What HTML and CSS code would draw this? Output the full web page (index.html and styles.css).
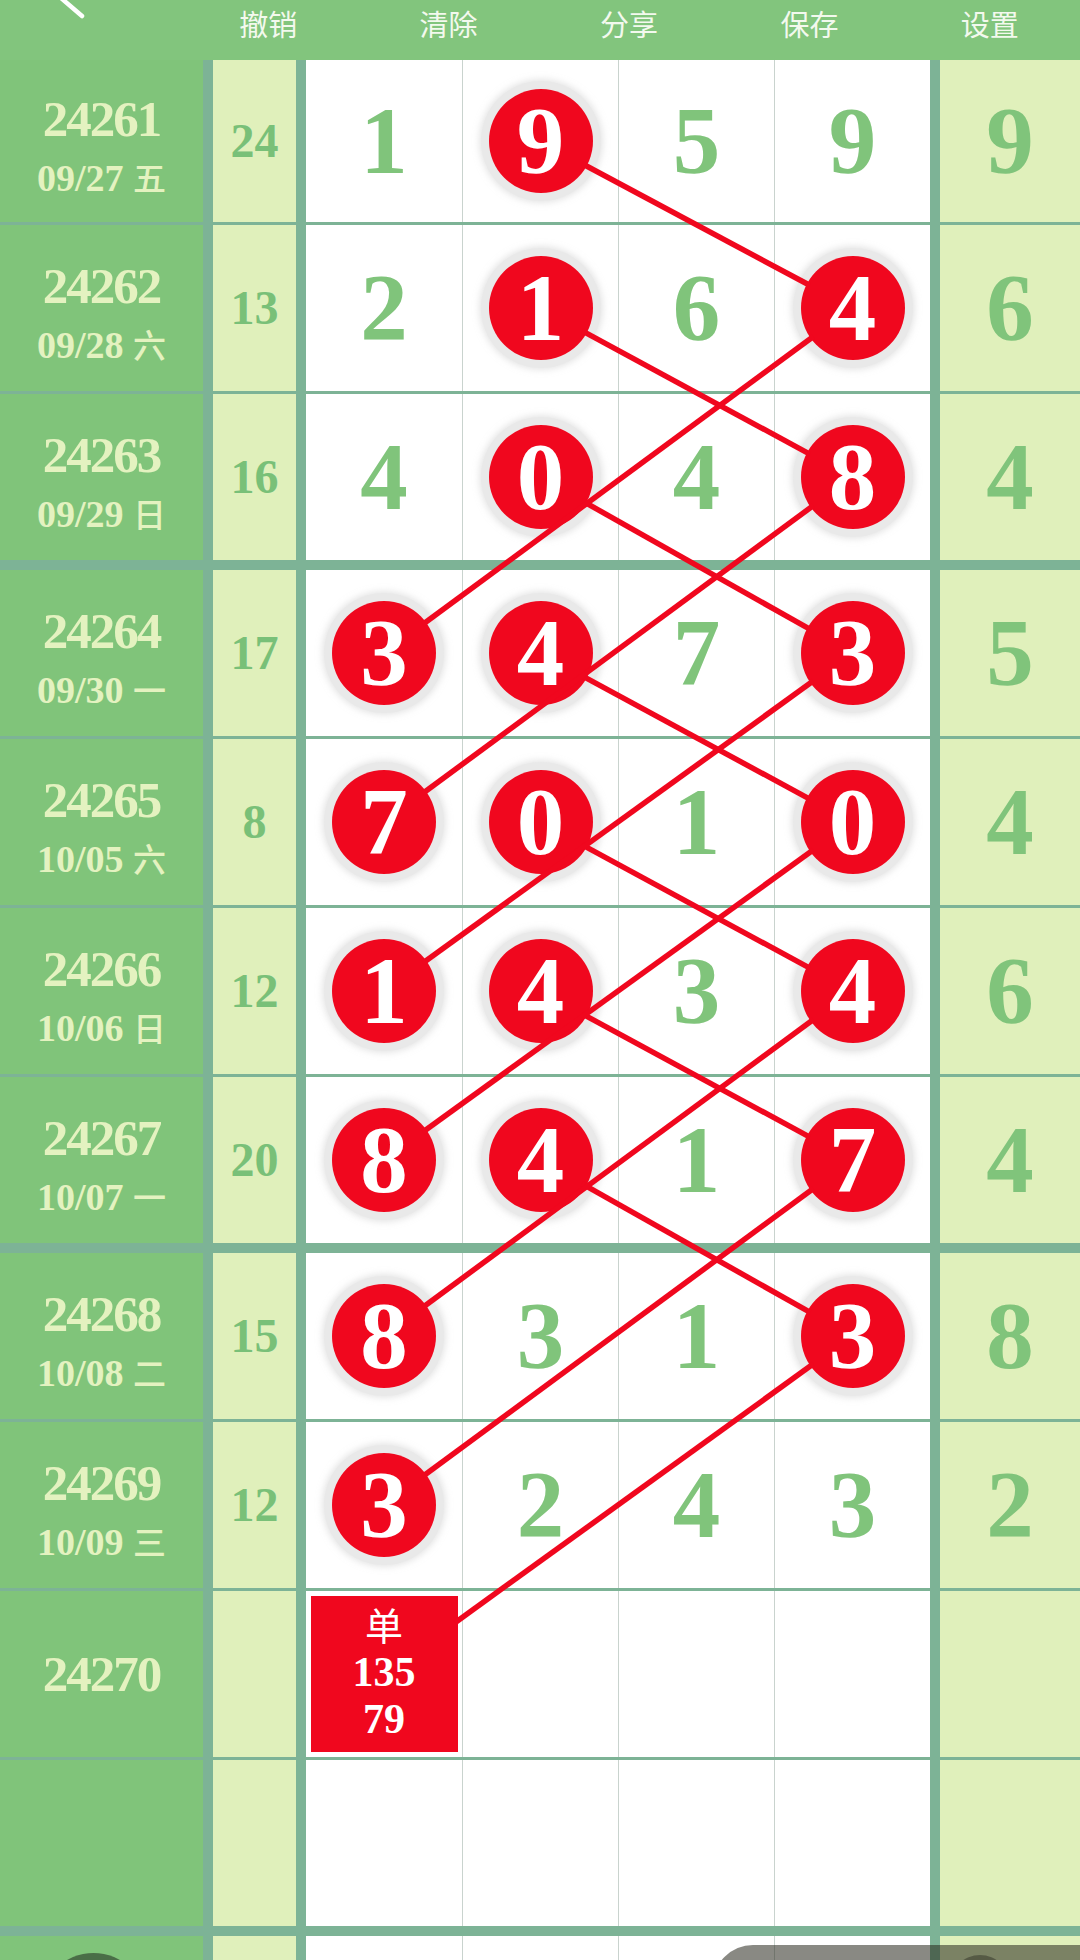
FILE: index.html
```html
<!DOCTYPE html>
<html lang="zh">
<head>
<meta charset="utf-8">
<title>走势图</title>
<link rel="stylesheet" href="styles.css">
</head>
<body>
<div class="page">
  <header class="topbar">
    <div class="back">
      <svg width="40" height="20" viewBox="0 0 40 20"><path d="M30 -24 L6 -2 L27 16" fill="none" stroke="#ffffff" stroke-width="4.5" stroke-linecap="round" stroke-linejoin="round"/></svg>
    </div>
    <span class="tool">撤销</span>
    <span class="tool">清除</span>
    <span class="tool">分享</span>
    <span class="tool">保存</span>
    <span class="tool">设置</span>
  </header>

  <main class="board">
    <section class="block">
      <div class="row row-cut">
        <div class="c-date"><span class="issue">24261</span><span class="date">09/27 <span class="wk">五</span></span></div>
        <div class="c-miss">24</div>
        <div class="c-main">
          <div class="cell"><span class="num">1</span></div>
          <div class="cell"><span class="ball">9</span></div>
          <div class="cell"><span class="num">5</span></div>
          <div class="cell"><span class="num">9</span></div>
        </div>
        <div class="c-tail"><span class="num">9</span></div>
      </div>
      <div class="row">
        <div class="c-date"><span class="issue">24262</span><span class="date">09/28 <span class="wk">六</span></span></div>
        <div class="c-miss">13</div>
        <div class="c-main">
          <div class="cell"><span class="num">2</span></div>
          <div class="cell"><span class="ball">1</span></div>
          <div class="cell"><span class="num">6</span></div>
          <div class="cell"><span class="ball">4</span></div>
        </div>
        <div class="c-tail"><span class="num">6</span></div>
      </div>
      <div class="row">
        <div class="c-date"><span class="issue">24263</span><span class="date">09/29 <span class="wk">日</span></span></div>
        <div class="c-miss">16</div>
        <div class="c-main">
          <div class="cell"><span class="num">4</span></div>
          <div class="cell"><span class="ball">0</span></div>
          <div class="cell"><span class="num">4</span></div>
          <div class="cell"><span class="ball">8</span></div>
        </div>
        <div class="c-tail"><span class="num">4</span></div>
      </div>
    </section>

    <section class="block">
      <div class="row">
        <div class="c-date"><span class="issue">24264</span><span class="date">09/30 <span class="wk">一</span></span></div>
        <div class="c-miss">17</div>
        <div class="c-main">
          <div class="cell"><span class="ball">3</span></div>
          <div class="cell"><span class="ball">4</span></div>
          <div class="cell"><span class="num">7</span></div>
          <div class="cell"><span class="ball">3</span></div>
        </div>
        <div class="c-tail"><span class="num">5</span></div>
      </div>
      <div class="row">
        <div class="c-date"><span class="issue">24265</span><span class="date">10/05 <span class="wk">六</span></span></div>
        <div class="c-miss">8</div>
        <div class="c-main">
          <div class="cell"><span class="ball">7</span></div>
          <div class="cell"><span class="ball">0</span></div>
          <div class="cell"><span class="num">1</span></div>
          <div class="cell"><span class="ball">0</span></div>
        </div>
        <div class="c-tail"><span class="num">4</span></div>
      </div>
      <div class="row">
        <div class="c-date"><span class="issue">24266</span><span class="date">10/06 <span class="wk">日</span></span></div>
        <div class="c-miss">12</div>
        <div class="c-main">
          <div class="cell"><span class="ball">1</span></div>
          <div class="cell"><span class="ball">4</span></div>
          <div class="cell"><span class="num">3</span></div>
          <div class="cell"><span class="ball">4</span></div>
        </div>
        <div class="c-tail"><span class="num">6</span></div>
      </div>
      <div class="row">
        <div class="c-date"><span class="issue">24267</span><span class="date">10/07 <span class="wk">一</span></span></div>
        <div class="c-miss">20</div>
        <div class="c-main">
          <div class="cell"><span class="ball">8</span></div>
          <div class="cell"><span class="ball">4</span></div>
          <div class="cell"><span class="num">1</span></div>
          <div class="cell"><span class="ball">7</span></div>
        </div>
        <div class="c-tail"><span class="num">4</span></div>
      </div>
    </section>

    <section class="block">
      <div class="row">
        <div class="c-date"><span class="issue">24268</span><span class="date">10/08 <span class="wk">二</span></span></div>
        <div class="c-miss">15</div>
        <div class="c-main">
          <div class="cell"><span class="ball">8</span></div>
          <div class="cell"><span class="num">3</span></div>
          <div class="cell"><span class="num">1</span></div>
          <div class="cell"><span class="ball">3</span></div>
        </div>
        <div class="c-tail"><span class="num">8</span></div>
      </div>
      <div class="row">
        <div class="c-date"><span class="issue">24269</span><span class="date">10/09 <span class="wk">三</span></span></div>
        <div class="c-miss">12</div>
        <div class="c-main">
          <div class="cell"><span class="ball">3</span></div>
          <div class="cell"><span class="num">2</span></div>
          <div class="cell"><span class="num">4</span></div>
          <div class="cell"><span class="num">3</span></div>
        </div>
        <div class="c-tail"><span class="num">2</span></div>
      </div>
      <div class="row">
        <div class="c-date c-single"><span class="issue">24270</span></div>
        <div class="c-miss"></div>
        <div class="c-main">
          <div class="cell">
            <div class="pick"><span class="pick-k">单</span><span class="pick-n">135</span><span class="pick-n">79</span></div>
          </div>
          <div class="cell"></div>
          <div class="cell"></div>
          <div class="cell"></div>
        </div>
        <div class="c-tail"></div>
      </div>
      <div class="row">
        <div class="c-date"></div>
        <div class="c-miss"></div>
        <div class="c-main">
          <div class="cell"></div><div class="cell"></div><div class="cell"></div><div class="cell"></div>
        </div>
        <div class="c-tail"></div>
      </div>
    </section>

    <section class="block">
      <div class="row">
        <div class="c-date"></div>
        <div class="c-miss"></div>
        <div class="c-main">
          <div class="cell"></div><div class="cell"></div><div class="cell"></div><div class="cell"></div>
        </div>
        <div class="c-tail"></div>
      </div>
    </section>
  </main>

  <svg class="links" width="1080" height="1960" viewBox="0 0 1080 1960">
    <g stroke="#f0071e" stroke-width="5.5" fill="none">
      <line x1="582.3" y1="163.7" x2="809.7" y2="285.3"/>
      <line x1="582.2" y1="330.9" x2="809.8" y2="454.1"/>
      <line x1="581.8" y1="500.6" x2="810.2" y2="629.4"/>
      <line x1="582.2" y1="675.9" x2="809.8" y2="799.1"/>
      <line x1="582.2" y1="844.9" x2="809.8" y2="968.1"/>
      <line x1="582.2" y1="1013.9" x2="809.8" y2="1137.1"/>
      <line x1="581.8" y1="1183.6" x2="810.2" y2="1312.4"/>
      <line x1="813.4" y1="336.5" x2="422.6" y2="624.5"/>
      <line x1="813.4" y1="505.5" x2="422.6" y2="793.5"/>
      <line x1="813.1" y1="681.1" x2="422.9" y2="962.9"/>
      <line x1="813.1" y1="850.1" x2="422.9" y2="1131.9"/>
      <line x1="813.4" y1="1019.5" x2="422.6" y2="1307.5"/>
      <line x1="813.4" y1="1188.5" x2="422.6" y2="1476.5"/>
      <line x1="813.1" y1="1364.1" x2="455" y2="1622.7"/>
    </g>
  </svg>

  <div class="fab-left"></div>
  <div class="dock"><span class="dock-dot"></span></div>
</div>
</body>
</html>
```

FILE: styles.css
```css
html, body {
  margin: 0;
  padding: 0;
}

body {
  background: #80c47a;
}

.page {
  position: relative;
  width: 1080px;
  height: 1960px;
  overflow: hidden;
  background: #7db396;
}

/* top toolbar */
.topbar {
  display: grid;
  grid-template-columns: 178px repeat(5, 1fr);
  align-items: start;
  height: 60px;
  background: #82c57d;
}

.back svg {
  display: block;
  margin-left: 55px;
}

.tool {
  padding-top: 4px;
  font: 400 29px/38px "Noto Sans CJK SC", "Noto Sans", sans-serif;
  color: #f3f9ee;
  text-align: center;
}

/* chart board */
.board {
  display: flex;
  flex-direction: column;
  gap: 10px;
  background: #7db396;
}

.block {
  display: flex;
  flex-direction: column;
  gap: 3px;
}

.row {
  display: grid;
  grid-template-columns: 203px 83px 624px 140px;
  column-gap: 10px;
  height: 166px;
}

.row-cut {
  height: 162px;
}

.c-date {
  display: flex;
  flex-direction: column;
  align-items: center;
  justify-content: center;
  gap: 14px;
  padding-top: 8px;
  background: #80c47a;
  color: #e4f2c0;
  font-family: "Liberation Serif", "Noto Sans CJK SC", serif;
  font-weight: 700;
}

.c-date.c-single {
  padding-top: 0;
  gap: 0;
}

.issue {
  font-size: 51px;
  line-height: 50px;
  letter-spacing: -2px;
}

.date {
  font-size: 38px;
  line-height: 38px;
}

.wk {
  font-family: "Noto Sans CJK SC", sans-serif;
  font-size: 33px;
  font-weight: 500;
}

.c-miss {
  display: flex;
  align-items: center;
  justify-content: center;
  background: #e0f0bb;
  color: #79c078;
  font: 700 48px/1 "Liberation Serif", serif;
}

.c-main {
  display: grid;
  grid-template-columns: repeat(4, 1fr);
  background: #ffffff;
}

.cell {
  display: flex;
  align-items: center;
  justify-content: center;
}

.cell + .cell {
  border-left: 1px solid #c9d3ce;
}

.c-tail {
  display: flex;
  align-items: center;
  justify-content: center;
  background: #e0f0bb;
}

.num {
  font: 700 95px/1 "Liberation Serif", serif;
  color: #80c47b;
}

.ball {
  display: flex;
  align-items: center;
  justify-content: center;
  width: 104px;
  height: 104px;
  border-radius: 50%;
  background: #f0071e;
  color: #ffffff;
  font: 700 95px/1 "Liberation Serif", serif;
  box-shadow: 0 0 0 8px #e9e9e9, 0 0 6px 10px rgba(205, 205, 205, 0.5);
}

.pick {
  display: flex;
  flex-direction: column;
  align-items: center;
  justify-content: center;
  width: 147px;
  height: 156px;
  background: #f0071e;
  color: #ffffff;
}

.pick-k {
  font: 400 38px/44px "Liberation Serif", "Noto Sans CJK SC", serif;
}

.pick-n {
  font: 700 42px/47px "Liberation Serif", serif;
}

/* connecting lines overlay */
.links {
  position: absolute;
  top: 0;
  left: 0;
  z-index: 5;
  pointer-events: none;
}

/* floating controls peeking at the bottom */
.fab-left {
  position: absolute;
  left: 40px;
  top: 1953px;
  z-index: 10;
  width: 107px;
  height: 107px;
  border-radius: 50%;
  background: rgba(30, 40, 30, 0.55);
}

.dock {
  position: absolute;
  left: 713px;
  top: 1945px;
  z-index: 10;
  width: 420px;
  height: 80px;
  border-radius: 40px;
  background: rgba(40, 40, 30, 0.55);
}

.dock-dot {
  position: absolute;
  left: 237px;
  top: 10px;
  width: 60px;
  height: 60px;
  border-radius: 50%;
  background: rgba(0, 0, 0, 0.3);
}
```
